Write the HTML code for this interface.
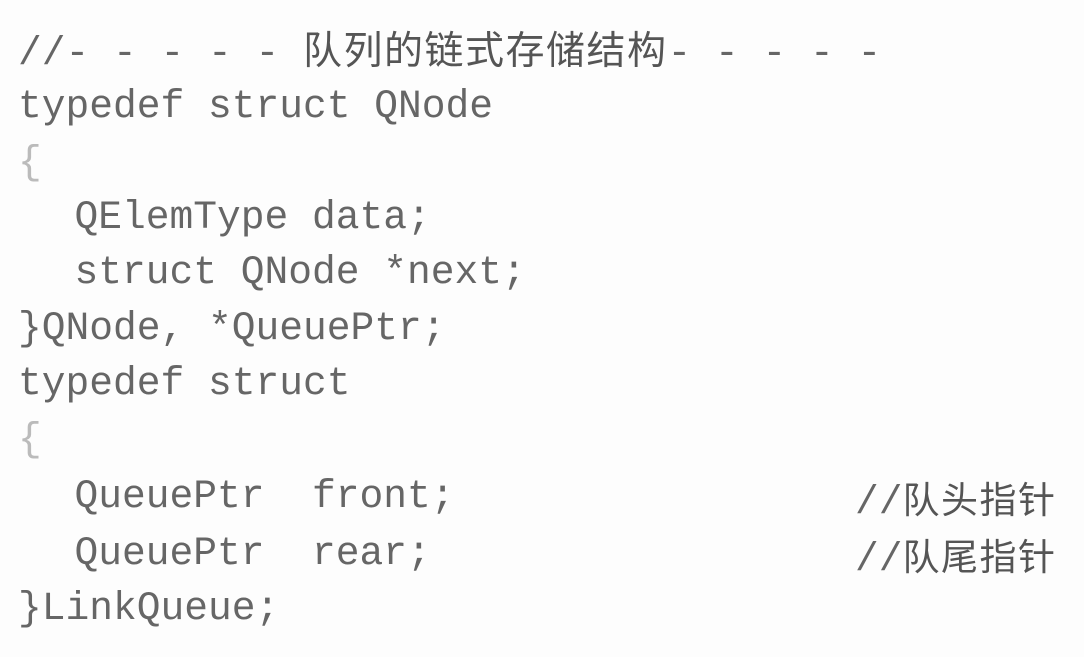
<!DOCTYPE html>
<html><head><meta charset="utf-8"><style>
html,body{margin:0;padding:0;background:#fdfdfd;width:1084px;height:657px;overflow:hidden}
.l{position:absolute;left:18px;height:56px;line-height:56px;font-family:"Liberation Mono","Noto Sans CJK SC",monospace;font-size:39.6px;color:#666;white-space:pre}
.c{font-family:"Noto Sans CJK SC",sans-serif;font-size:39px;letter-spacing:1.5px;color:#555}
.r{position:absolute;left:855px}
.c2{font-family:"Noto Sans CJK SC",sans-serif;font-size:37px;letter-spacing:1.5px;color:#555}
.i{padding-left:9px}
</style></head><body>
<div class="l" style="top:20px">//- - - - - <span class="c">队列的链式存储结构</span>- - - - -</div>
<div class="l" style="top:79px">typedef struct QNode</div>
<div class="l" style="top:135px;color:#bbb">{</div>
<div class="l i" style="top:190px">  QElemType data;</div>
<div class="l i" style="top:245px">  struct QNode *next;</div>
<div class="l" style="top:301px">}QNode, *QueuePtr;</div>
<div class="l" style="top:356px">typedef struct</div>
<div class="l" style="top:412px;color:#bbb">{</div>
<div class="l i" style="top:469px">  QueuePtr  front;</div>
<div class="l r" style="top:469px">//<span class="c2">队头指针</span></div>
<div class="l i" style="top:526px">  QueuePtr  rear;</div>
<div class="l r" style="top:526px">//<span class="c2">队尾指针</span></div>
<div class="l" style="top:581px">}LinkQueue;</div>
</body></html>
